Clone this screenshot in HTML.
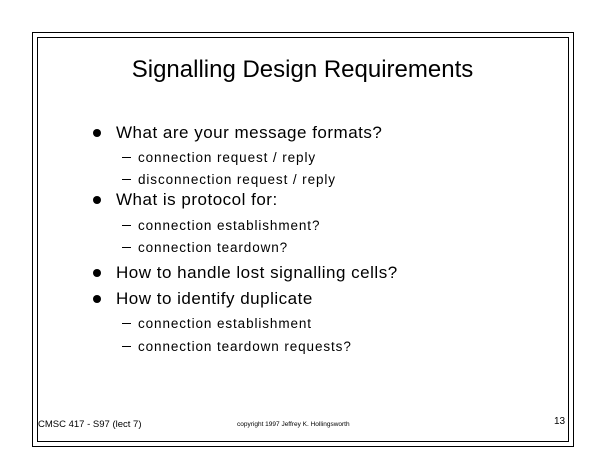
<!DOCTYPE html><html><head><style>
body{margin:0;width:605px;height:468px;background:#fff;position:relative;overflow:hidden;font-family:"Liberation Sans",sans-serif;color:#000}
.b{position:absolute;border:1px solid #000}
.t{position:absolute;white-space:nowrap;line-height:1}
.l1{font-size:17px;left:116px;letter-spacing:0.5px}
.l2{font-size:13.5px;left:138px;letter-spacing:0.9px}
.d{position:absolute;width:8px;height:8px;border-radius:50%;background:#000;left:93px}
.h{position:absolute;width:9px;height:1px;background:#000;left:122px}
</style></head><body>
<div class="b" style="left:32px;top:32px;width:540px;height:413px"></div>
<div class="b" style="left:37px;top:37px;width:530px;height:403px"></div>
<div class="t" style="left:0;width:605px;text-align:center;top:58px;font-size:24px">Signalling Design Requirements</div>

<div class="d" style="top:129px"></div><div class="t l1" style="top:124px">What are your message formats?</div>
<div class="h" style="top:157px"></div><div class="t l2" style="top:151px">connection request / reply</div>
<div class="h" style="top:179px"></div><div class="t l2" style="top:173px">disconnection request / reply</div>
<div class="d" style="top:196px"></div><div class="t l1" style="top:191px">What is protocol for:</div>
<div class="h" style="top:225px"></div><div class="t l2" style="top:219px">connection establishment?</div>
<div class="h" style="top:247px"></div><div class="t l2" style="top:241px">connection teardown?</div>
<div class="d" style="top:269px"></div><div class="t l1" style="top:264px">How to handle lost signalling cells?</div>
<div class="d" style="top:295px"></div><div class="t l1" style="top:290px">How to identify duplicate</div>
<div class="h" style="top:323px"></div><div class="t l2" style="top:317px">connection establishment</div>
<div class="h" style="top:346px"></div><div class="t l2" style="top:340px">connection teardown requests?</div>

<div class="t" style="left:38px;top:420px;font-size:9.5px">CMSC 417 - S97 (lect 7)</div>
<div class="t" style="left:237px;top:422px;font-size:6.5px">copyright 1997 Jeffrey K. Hollingsworth</div>
<div class="t" style="left:554px;top:417px;font-size:10px">13</div>
</body></html>
